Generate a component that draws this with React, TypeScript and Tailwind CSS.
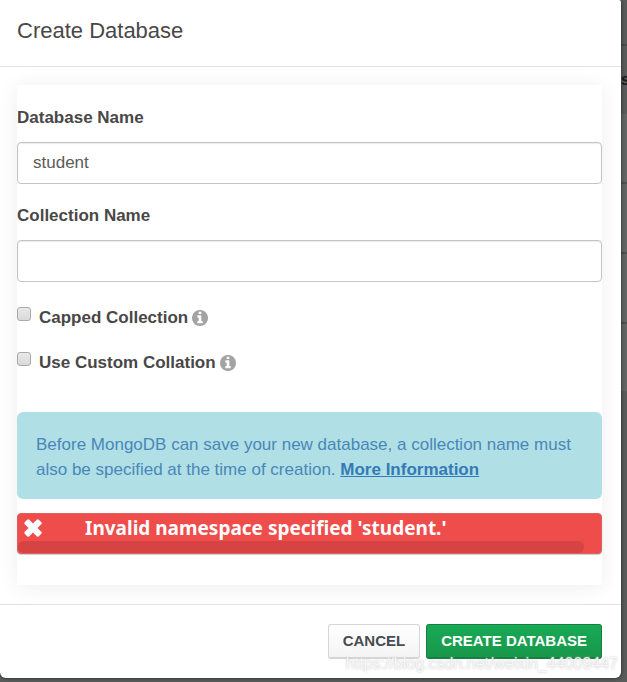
import React, { useState } from 'react'

type FieldProps = {
  id: string,
  label: string,
  value: string,
  onChange: (value: string) => void,
}

type OptionProps = {
  id: string,
  label: string,
}

function InfoIcon() {
  return (
    <svg viewBox="0 0 1536 1536" className="size-4 fill-[#a3a3a3]" aria-hidden="true">
      <path d="M1024 1248v-160q0-14-9-23t-23-9h-96V544q0-14-9-23t-23-9H544q-14 0-23 9t-9 23v160q0 14 9 23t23 9h96v320h-96q-14 0-23 9t-9 23v160q0 14 9 23t23 9h448q14 0 23-9t9-23zM896 352V192q0-14-9-23t-23-9H672q-14 0-23 9t-9 23v160q0 14 9 23t23 9h192q14 0 23-9t9-23zm640 416q0 209-103 385.500T1153.500 1433 768 1536t-385.500-103T103 1153.500 0 768t103-385.500T382.500 103 768 0t385.500 103T1433 382.500 1536 768z" />
    </svg>
  )
}

function CrossIcon() {
  return (
    <svg viewBox="0 0 20 20" className="size-5" aria-hidden="true">
      <path d="M5.200 2.800L2.800 5.200 7.600 10 2.800 14.800 5.200 17.200 10 12.400 14.800 17.200 17.200 14.800 12.400 10 17.200 5.200 14.800 2.800 10 7.600Z" fill="white" stroke="white" strokeWidth="3" strokeLinejoin="round" />
    </svg>
  )
}

function Field({ id, label, value, onChange }: FieldProps) {
  return (
    <div>
      <label htmlFor={id} className="block font-bold leading-6">{label}</label>
      <input
        id={id}
        type="text"
        value={value}
        onChange={(e) => onChange(e.target.value)}
        className="mt-3 block h-[42px] w-full rounded border border-[#c4c4c4] bg-white px-[15px] text-[#5b5b5b] shadow-[inset_0_1px_1px_rgba(0,0,0,0.08)] outline-none"
      />
    </div>
  )
}

function Option({ id, label }: OptionProps) {
  return (
    <div className="flex items-start">
      <input
        id={id}
        type="checkbox"
        className="mt-0.5 size-3.5 appearance-none rounded-[3px] border border-[#aaa] bg-linear-to-b from-[#e9e9e9] to-[#d9d9d9] checked:bg-[#4285f4]"
      />
      <label htmlFor={id} className="ml-2 font-bold leading-[26px]">{label}</label>
      <span className="ml-1 mt-[5px]"><InfoIcon /></span>
    </div>
  )
}

export default function App() {

  const [database, setDatabase] = useState('student')
  const [collection, setCollection] = useState('')

  return (

    <div className="relative min-h-screen overflow-hidden bg-[#5b5d5d] pb-1 pr-1.5 font-['Liberation_Sans',Arial,sans-serif] text-[17px] text-[#494747]">

      {/* dimmed page behind the dialog */}
      <div className="absolute inset-y-0 right-0 w-1.5 overflow-hidden bg-[#5a5c5c]" aria-hidden="true">
        <div className="h-[46px] border-b-2 border-[#4b4d4d]"></div>
        <div className="h-[68px] pt-6 text-base font-bold leading-5 text-[#1b1b1b]">s</div>
        <div className="h-[70px] border-b-2 border-[#505252] bg-[#646666]"></div>
        <div className="h-[70px] border-b-2 border-[#505252] bg-[#646666]"></div>
        <div className="h-[70px] border-b-2 border-[#505252] bg-[#646666]"></div>
        <div className="h-[67px] bg-[#646666]"></div>
      </div>

      <div role="dialog" aria-labelledby="dialog-title" className="relative rounded-b-md rounded-tr-xs bg-white shadow-[0_0_4px_rgba(0,0,0,0.6)]">

        <div className="border-b border-[#e3e3e3] px-[17px] pb-5 pt-4">
          <h1 id="dialog-title" className="text-[22px] leading-[30px]">Create Database</h1>
        </div>

        <form onSubmit={(e) => e.preventDefault()}>
          <div className="pb-[19px] pl-[17px] pr-[19px] pt-[18px]">
            <div className="pb-[31px] pt-[21px] shadow-[0_2px_20px_rgba(0,0,0,0.07)]">

              <div className="flex flex-col gap-5">
                <Field id="database" label="Database Name" value={database} onChange={setDatabase} />
                <Field id="collection" label="Collection Name" value={collection} onChange={setCollection} />
              </div>

              <div className="mt-[23px] flex flex-col gap-[19px]">
                <Option id="capped" label="Capped Collection" />
                <Option id="collation" label="Use Custom Collation" />
              </div>

              <div className="mt-9 rounded-md bg-[#b0dfe5] pb-[17px] pl-[19px] pr-[19px] pt-5 leading-[25px] text-[#4a87b9]">
                Before MongoDB can save your new database, a collection name must also be specified at the time of creation.{' '}
                <a href="#more" className="font-bold text-[#337ab7] underline">More Information</a>
              </div>

              <div role="alert" className="mt-3.5 overflow-hidden rounded border border-[#dc6060] bg-[#ef4c4c] shadow-[0_1px_1px_rgba(0,0,0,0.2)]">
                <div className="flex h-[27px] items-center gap-[42px] pl-[5px] text-white">
                  <CrossIcon />
                  <span className="font-['Noto_Sans',sans-serif] text-[19px] font-bold leading-7">Invalid namespace specified 'student.'</span>
                </div>
                <div className="h-3 w-[97%] rounded-md bg-[#d64343]"></div>
              </div>

            </div>
          </div>

          <div className="flex justify-end gap-1.5 border-t border-[#e3e3e3] pb-[19px] pr-[19px] pt-[19px] text-[15px] font-bold">
            <button type="button" className="h-[35px] rounded-[3px] border border-b-2 border-[#d6d6d6] bg-linear-to-b from-white to-[#f4f4f4] px-3.5 text-[#464c4f]">CANCEL</button>
            <button type="submit" className="h-[35px] rounded-[3px] border border-b-2 border-[#148040] bg-linear-to-b from-[#18aa55] to-[#18974b] px-3.5 text-white">CREATE DATABASE</button>
          </div>
        </form>
      </div>

      <div className="pointer-events-none absolute bottom-1.5 right-[9px] text-base leading-6 text-white/80 [text-shadow:0_0_2px_#bbb]">https://blog.csdn.net/weixin_44009447</div>
    </div>
  )
}
